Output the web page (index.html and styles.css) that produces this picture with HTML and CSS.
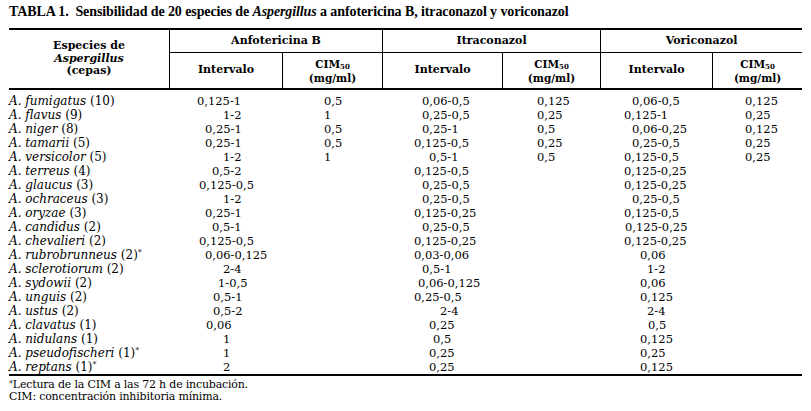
FILE: index.html
```html
<!DOCTYPE html>
<html lang="es">
<head>
<meta charset="utf-8">
<title>Tabla 1</title>
<link rel="stylesheet" href="styles.css">
</head>
<body>
<div class="page">
  <h1 class="title">TABLA 1.&nbsp; Sensibilidad de 20 especies de <i>Aspergillus</i> a anfotericina B, itraconazol y voriconazol</h1>
  <table class="tbl">
    <colgroup>
      <col class="c-sp"><col class="c-ai"><col class="c-ac"><col class="c-ii"><col class="c-ic"><col class="c-vi"><col class="c-vc">
    </colgroup>
    <thead>
      <tr class="h1">
        <th rowspan="2" class="sp">Especies de<br><i>Aspergillus</i><br>(cepas)</th>
        <th colspan="2" class="grp">Anfotericina B</th>
        <th colspan="2" class="grp">Itraconazol</th>
        <th colspan="2" class="grp">Voriconazol</th>
      </tr>
      <tr class="h2">
        <th class="sub">Intervalo</th>
        <th class="sub cim">CIM<sub>50</sub><br>(mg/ml)</th>
        <th class="sub">Intervalo</th>
        <th class="sub cim">CIM<sub>50</sub><br>(mg/ml)</th>
        <th class="sub">Intervalo</th>
        <th class="sub cim">CIM<sub>50</sub><br>(mg/ml)</th>
      </tr>
    </thead>
    <tbody>
      <tr class="first"><td class="sp"><i>A. fumigatus</i> (10)</td><td class="x28">0,125-1</td><td class="x42">0,5</td><td class="x40">0,06-0,5</td><td class="x35">0,125</td><td class="x32">0,06-0,5</td><td class="x33">0,125</td></tr>
      <tr><td class="sp"><i>A. flavus</i> (9)</td><td class="x54">1-2</td><td class="x42">1</td><td class="x40">0,25-0,5</td><td class="x35">0,25</td><td class="x24">0,125-1</td><td class="x33">0,25</td></tr>
      <tr><td class="sp"><i>A. niger</i> (8)</td><td class="x36">0,25-1</td><td class="x42">0,5</td><td class="x40">0,25-1</td><td class="x35">0,5</td><td class="x32">0,06-0,25</td><td class="x33">0,125</td></tr>
      <tr><td class="sp"><i>A. tamarii</i> (5)</td><td class="x36">0,25-1</td><td class="x42">0,5</td><td class="x32">0,125-0,5</td><td class="x35">0,25</td><td class="x32">0,25-0,5</td><td class="x33">0,25</td></tr>
      <tr><td class="sp"><i>A. versicolor</i> (5)</td><td class="x54">1-2</td><td class="x42">1</td><td class="x47">0,5-1</td><td class="x35">0,5</td><td class="x24">0,125-0,5</td><td class="x33">0,25</td></tr>
      <tr><td class="sp"><i>A. terreus</i> (4)</td><td class="x43">0,5-2</td><td></td><td class="x32">0,125-0,5</td><td></td><td class="x24">0,125-0,25</td><td></td></tr>
      <tr><td class="sp"><i>A. glaucus</i> (3)</td><td class="x30">0,125-0,5</td><td></td><td class="x40">0,25-0,5</td><td></td><td class="x24">0,125-0,25</td><td></td></tr>
      <tr><td class="sp"><i>A. ochraceus</i> (3)</td><td class="x54">1-2</td><td></td><td class="x40">0,25-0,5</td><td></td><td class="x32">0,25-0,5</td><td></td></tr>
      <tr><td class="sp"><i>A. oryzae</i> (3)</td><td class="x36">0,25-1</td><td></td><td class="x32">0,125-0,25</td><td></td><td class="x24">0,125-0,5</td><td></td></tr>
      <tr><td class="sp"><i>A. candidus</i> (2)</td><td class="x43">0,5-1</td><td></td><td class="x40">0,25-0,5</td><td></td><td class="x25">0,125-0,25</td><td></td></tr>
      <tr><td class="sp"><i>A. chevalieri</i> (2)</td><td class="x30">0,125-0,5</td><td></td><td class="x32">0,125-0,25</td><td></td><td class="x24">0,125-0,25</td><td></td></tr>
      <tr><td class="sp"><i>A. rubrobrunneus</i> (2)<span class="ast">*</span></td><td class="x36">0,06-0,125</td><td></td><td class="x32">0,03-0,06</td><td></td><td class="x40">0,06</td><td></td></tr>
      <tr><td class="sp"><i>A. sclerotiorum</i> (2)</td><td class="x54">2-4</td><td></td><td class="x40">0,5-1</td><td></td><td class="x47">1-2</td><td></td></tr>
      <tr><td class="sp"><i>A. sydowii</i> (2)</td><td class="x49">1-0,5</td><td></td><td class="x36">0,06-0,125</td><td></td><td class="x40">0,06</td><td></td></tr>
      <tr><td class="sp"><i>A. unguis</i> (2)</td><td class="x44">0,5-1</td><td></td><td class="x32">0,25-0,5</td><td></td><td class="x40">0,125</td><td></td></tr>
      <tr><td class="sp"><i>A. ustus</i> (2)</td><td class="x44">0,5-2</td><td></td><td class="x58">2-4</td><td></td><td class="x47">2-4</td><td></td></tr>
      <tr><td class="sp"><i>A. clavatus</i> (1)</td><td class="x37">0,06</td><td></td><td class="x47">0,25</td><td></td><td class="x48">0,5</td><td></td></tr>
      <tr><td class="sp"><i>A. nidulans</i> (1)</td><td class="x54">1</td><td></td><td class="x51">0,5</td><td></td><td class="x40">0,125</td><td></td></tr>
      <tr><td class="sp"><i>A. pseudofischeri</i> (1)<span class="ast">*</span></td><td class="x54">1</td><td></td><td class="x47">0,25</td><td></td><td class="x40">0,25</td><td></td></tr>
      <tr class="last"><td class="sp"><i>A. reptans</i> (1)<span class="ast">*</span></td><td class="x54">2</td><td></td><td class="x47">0,25</td><td></td><td class="x40">0,125</td><td></td></tr>
    </tbody>
  </table>
  <div class="notes">
    <p><span class="ast">*</span>Lectura de la CIM a las 72 h de incubación.</p>
    <p>CIM: concentración inhibitoria mínima.</p>
  </div>
</div>
</body>
</html>
```
FILE: styles.css
```css
html, body {
  margin: 0;
  padding: 0;
  background: #fff;
  color: #000;
}
.page {
  width: 811px;
  padding-left: 9px;
  box-sizing: border-box;
}
.title {
  margin: 0 0 8px 0;
  padding-top: 4px;
  height: 16px;
  line-height: 16px;
  font-family: "Liberation Serif", serif;
  font-size: 14px;
  font-weight: bold;
  letter-spacing: -0.1px;
  white-space: nowrap;
}
.tbl {
  width: 793px;
  table-layout: fixed;
  border-collapse: separate;
  border-spacing: 0;
  border-top: 2px solid #000;
  border-bottom: 2px solid #000;
  font-family: "DejaVu Serif", serif;
  font-size: 11.5px;
}
.c-sp { width: 160px; }
.c-ai { width: 113px; }
.c-ac { width: 100px; }
.c-ii { width: 120px; }
.c-ic { width: 98px; }
.c-vi { width: 112px; }
.c-vc { width: 90px; }

.tbl th {
  padding: 0;
  font-weight: bold;
  font-size: 11px;
  text-align: center;
  vertical-align: middle;
  line-height: 12.5px;
}
.tbl th.sp {
  border-bottom: 2px solid #000;
}
.tbl th.grp {
  height: 22px;
  border-left: 1px solid #000;
  border-bottom: 1px solid #000;
}
.tbl th.sub {
  height: 35px;
  border-left: 1px solid #000;
  border-bottom: 2px solid #000;
}
.tbl th.cim {
  font-size: 10.5px;
  line-height: 12px;
}
.tbl sub {
  font-size: 7px;
  vertical-align: baseline;
  position: relative;
  top: 1px;
}
.tbl td {
  padding: 0;
  height: 14px;
  line-height: 14px;
  white-space: nowrap;
  text-align: left;
  vertical-align: middle;
}
.tbl tr.first td {
  padding-top: 4px;
}
.tbl td.sp {
  padding-left: 0;
  font-size: 12px;
}
.ast {
  font-size: 8px;
  vertical-align: top;
  line-height: 10px;
}
.x24 { padding-left: 24px !important; }
.x25 { padding-left: 25px !important; }
.x28 { padding-left: 28px !important; }
.x30 { padding-left: 30px !important; }
.x32 { padding-left: 32px !important; }
.x33 { padding-left: 33px !important; }
.x35 { padding-left: 35px !important; }
.x36 { padding-left: 36px !important; }
.x37 { padding-left: 37px !important; }
.x40 { padding-left: 40px !important; }
.x42 { padding-left: 42px !important; }
.x43 { padding-left: 43px !important; }
.x44 { padding-left: 44px !important; }
.x47 { padding-left: 47px !important; }
.x48 { padding-left: 48px !important; }
.x49 { padding-left: 49px !important; }
.x51 { padding-left: 51px !important; }
.x54 { padding-left: 54px !important; }
.x58 { padding-left: 58px !important; }

.notes {
  padding-top: 3px;
  font-family: "DejaVu Serif", serif;
  font-size: 11px;
  letter-spacing: -0.2px;
  line-height: 12px;
}
.notes p {
  margin: 0;
}
.notes .ast {
  font-size: 8px;
  line-height: 9px;
}
```
